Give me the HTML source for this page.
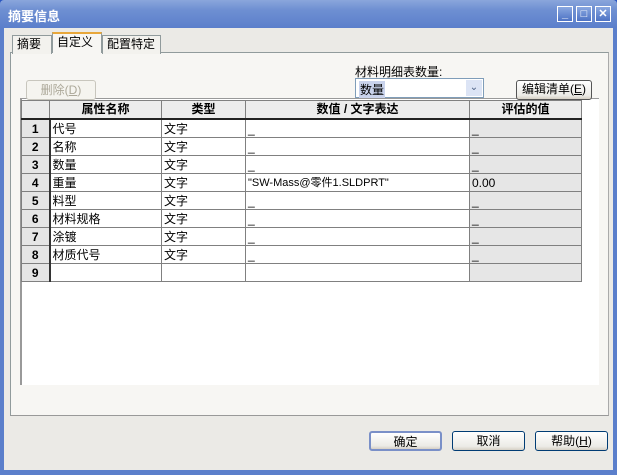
<!DOCTYPE html>
<html><head><meta charset="utf-8"><style>
*{box-sizing:border-box;margin:0;padding:0}
body{width:617px;height:475px;overflow:hidden;font-family:"Liberation Sans","Noto Sans CJK SC",sans-serif;font-size:12px;background:#2a55c0;position:relative}
.win{position:absolute;left:0;top:0;width:617px;height:475px;background:linear-gradient(#8aa6dc,#6e8fd2 10px,#5b7fcb 28px);border-radius:4px 4px 0 0}
.title{position:absolute;left:8px;top:6px;color:#fff;font-weight:bold;font-size:13px}
.tb{position:absolute;top:6px;width:16px;height:16px;border:1px solid #fff;background:linear-gradient(#8aa8e0,#4d72c4);color:#fff;font-size:11px;font-weight:bold;text-align:center;line-height:14px}
.client{position:absolute;left:4px;top:28px;width:609px;height:442px;background:#ebeae6}
.abs{position:absolute}
.tab{position:absolute;height:19px;border:1px solid #919b9c;border-bottom:none;background:#f3f2ee;padding:0 4px;line-height:17px;font-size:12px}
.page{position:absolute;left:10px;top:52px;width:599px;height:364px;background:#f7f6f3;border:1px solid #919b9c;border-right-color:#aaa;border-bottom-color:#999}
.btn{position:absolute;height:20px;border:1px solid #003c74;border-radius:3px;background:linear-gradient(#fff,#ecebe6 80%,#d6d0c5);text-align:center;line-height:18px;font-size:12px}
table{border-collapse:collapse;position:absolute;left:21px;top:100px}
td{border:1px solid #808080;height:18px;padding:2px 2px 0;font-size:12px;line-height:15px;white-space:nowrap;overflow:hidden}
th{border:1px solid #808080;height:18px;background:#ececec;font-size:12px;font-weight:bold;border-bottom:2px solid #222;line-height:15px}
td.rh{background:#e6e6e6;text-align:center;font-weight:bold;border-right:2px solid #333}
td.ev{background:#e6e6e6}
</style></head><body>
<div class="win">
<div class="title">摘要信息</div>
<div class="tb" style="left:557px">_</div>
<div class="tb" style="left:576px">□</div>
<div class="tb" style="left:595px">✕</div>
</div>
<div class="client"></div>
<div class="page"></div>
<div class="tab" style="left:12px;top:35px;width:40px">摘要</div>
<div class="tab" style="left:52px;top:32px;width:50px;height:21px;background:#f7f6f3;border-top:2px solid #e8a73a;z-index:2">自定义</div>
<div class="tab" style="left:102px;top:35px;width:59px">配置特定</div>
<div class="abs" style="left:20px;top:98px;width:579px;height:287px;background:#fff;border-left:2px solid #999;border-top:1px solid #999"></div>
<div class="abs" style="left:355px;top:63px">材料明细表数量:</div>
<div class="abs" style="left:355px;top:78px;width:129px;height:20px;background:#fff;border:1px solid #7f9db9"><span style="position:absolute;left:3px;top:2px;background:#c9d3ec;padding:0 1px">数量</span><span style="position:absolute;right:1px;top:1px;width:16px;height:16px;background:#dce4f5;color:#4d6185;text-align:center;font-size:10px;line-height:16px">⌄</span></div>
<div class="btn" style="left:516px;top:80px;width:76px;border-color:#555;line-height:17px">编辑清单(<u>E</u>)</div>
<div class="btn" style="left:26px;top:80px;width:70px;border-color:#c8c6bd;color:#aca899;background:#f5f4ef">删除(<u>D</u>)</div>
<table>
<tr><th style="width:28px"></th><th style="width:112px">属性名称</th><th style="width:84px">类型</th><th style="width:224px">数值 / 文字表达</th><th style="width:112px">评估的值</th></tr>
<tr><td class="rh">1</td><td>代号</td><td>文字</td><td>_</td><td class="ev">_</td></tr>
<tr><td class="rh">2</td><td>名称</td><td>文字</td><td>_</td><td class="ev">_</td></tr>
<tr><td class="rh">3</td><td>数量</td><td>文字</td><td>_</td><td class="ev">_</td></tr>
<tr><td class="rh">4</td><td>重量</td><td>文字</td><td style="font-size:11px">"SW-Mass@零件1.SLDPRT"</td><td class="ev">0.00</td></tr>
<tr><td class="rh">5</td><td>料型</td><td>文字</td><td>_</td><td class="ev">_</td></tr>
<tr><td class="rh">6</td><td>材料规格</td><td>文字</td><td>_</td><td class="ev">_</td></tr>
<tr><td class="rh">7</td><td>涂镀</td><td>文字</td><td>_</td><td class="ev">_</td></tr>
<tr><td class="rh">8</td><td>材质代号</td><td>文字</td><td>_</td><td class="ev">_</td></tr>
<tr><td class="rh">9</td><td></td><td></td><td></td><td class="ev"></td></tr>
</table>
<div class="btn" style="left:369px;top:431px;width:73px;border:2px solid #7a90c8">确定</div>
<div class="btn" style="left:452px;top:431px;width:73px">取消</div>
<div class="btn" style="left:535px;top:431px;width:73px">帮助(<u>H</u>)</div>
</body></html>
